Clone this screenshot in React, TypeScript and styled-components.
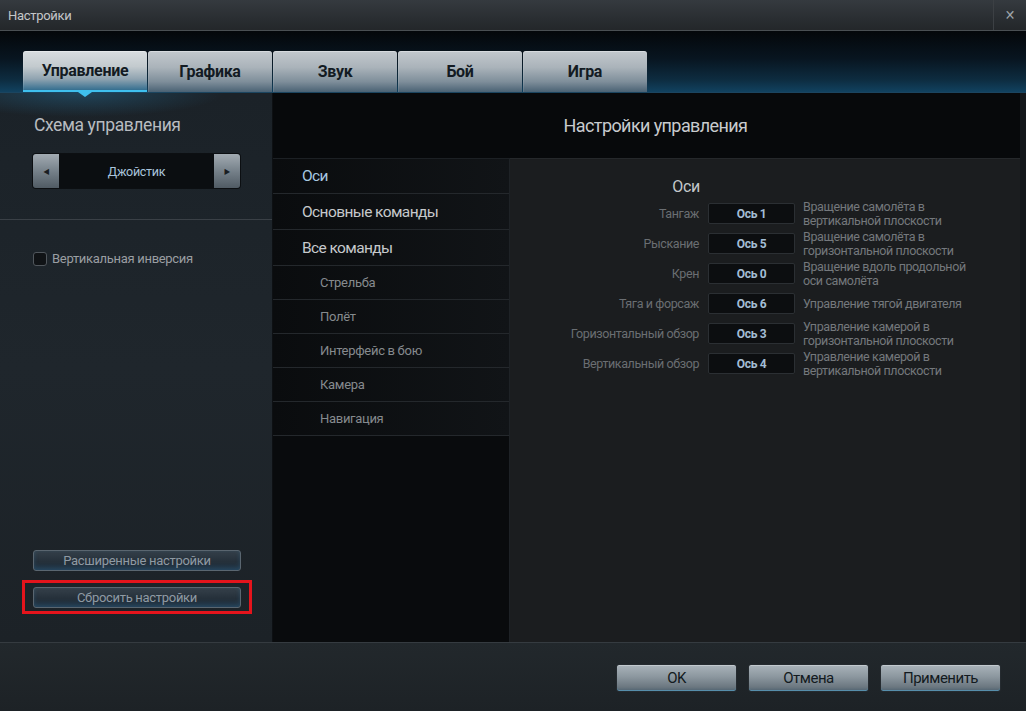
import React from "react";
import styled, { createGlobalStyle, css } from "styled-components";

const FONT = `"Roboto", "DejaVu Sans Condensed", sans-serif`;

const Global = createGlobalStyle`
  html, body { margin: 0; padding: 0; background: #15191c; }
  body { font-family: ${FONT}; letter-spacing: -0.3px; }
  * { box-sizing: border-box; }
`;

const Window = styled.div`
  width: 1026px;
  height: 711px;
  display: flex;
  flex-direction: column;
  background: #1d2226;
  overflow: hidden;
`;

const TitleBar = styled.div`
  height: 31px;
  display: flex;
  align-items: center;
  background: linear-gradient(180deg, #353a3f 0%, #2a2e32 60%, #24272a 100%);
  border-bottom: 1px solid #4a4f53;
  color: #c4c6c8;
  font-size: 13px;
  padding-left: 8px;
`;

const Title = styled.div`
  flex: 1;
`;

const CloseBox = styled.div`
  width: 33px;
  height: 30px;
  border-left: 1px solid #3c4044;
  display: flex;
  align-items: center;
  justify-content: center;
  color: #9ea4a9;
  font-size: 14px;
  font-weight: bold;
`;

const TabStrip = styled.div`
  height: 62px;
  display: flex;
  align-items: flex-end;
  padding-left: 23px;
  gap: 1px;
  background: linear-gradient(180deg, #04070a 0%, #081520 45%, #0d2c40 80%, #114260 100%);
  border-bottom: 1px solid #1b4560;
`;

const Tab = styled.div<{ $active?: boolean }>`
  position: relative;
  width: 124px;
  height: 41px;
  display: flex;
  align-items: center;
  justify-content: center;
  border-radius: 3px 3px 0 0;
  font-weight: bold;
  font-size: 16px;
  color: #131b23;
  background: linear-gradient(180deg, #c2c8cd 0%, #aab3ba 40%, #7e8e9a 75%, #4a6274 100%);
  box-shadow: inset 0 1px 0 rgba(255, 255, 255, 0.35), inset 1px 0 0 rgba(255, 255, 255, 0.1);
  ${(p) =>
    p.$active &&
    css`
      background: linear-gradient(180deg, #d8dde0 0%, #c3cace 40%, #8fa3b0 72%, #356f90 100%);
      border-bottom: 2px solid #3fc0ee;
      &::after {
        content: "";
        position: absolute;
        left: 55px;
        bottom: -7px;
        border-left: 7px solid transparent;
        border-right: 7px solid transparent;
        border-top: 5px solid #3fc0ee;
      }
    `}
`;

const Body = styled.div`
  height: 549px;
  display: flex;
`;

const LeftPanel = styled.div`
  width: 273px;
  display: flex;
  flex-direction: column;
  background:
    radial-gradient(ellipse 180px 30px at 80px 0px, rgba(40, 130, 180, 0.35), transparent 80%),
    linear-gradient(180deg, #1b2228 0%, #1f262c 50%, #1c2227 100%);
  border-right: 1px solid #0d1013;
`;

const SchemeHead = styled.div`
  padding: 22px 0 0 34px;
  color: #b8bcc0;
  font-size: 17.5px;
  letter-spacing: -0.4px;
  height: 61px;
`;

const Selector = styled.div`
  margin-left: 33px;
  width: 207px;
  height: 34px;
  display: flex;
  border-radius: 3px;
  overflow: hidden;
  box-shadow: 0 0 0 1px #0c0f12;
`;

const ArrowBtn = styled.div`
  width: 26px;
  display: flex;
  align-items: center;
  justify-content: center;
  background: linear-gradient(180deg, #a2abb2 0%, #76818a 50%, #505b64 100%);
  color: #1a1e22;
  font-size: 8px;
`;

const SelValue = styled.div`
  flex: 1;
  display: flex;
  align-items: center;
  justify-content: center;
  background: #0b0e11;
  color: #a9c4dc;
  font-size: 12.5px;
`;

const Divider = styled.div`
  margin-top: 31px;
  height: 1px;
  background: #3a4046;
`;

const CheckRow = styled.label`
  margin: 31px 0 0 33px;
  display: flex;
  align-items: center;
  gap: 5px;
  color: #9a9ea2;
  font-size: 13px;
`;

const CheckBox = styled.span`
  width: 14px;
  height: 14px;
  border: 1px solid #50565c;
  border-radius: 3px;
  background: #101316;
`;

const LeftButtons = styled.div`
  margin-top: auto;
  margin-bottom: 28px;
  display: flex;
  flex-direction: column;
  gap: 16px;
  padding-left: 33px;
`;

const Highlight = styled.div`
  margin-left: -11px;
  width: 230px;
  height: 34px;
  border: 3px solid #e5141c;
  margin-top: -7px;
  padding: 4px 8px;
`;

const SmallBtn = styled.div`
  width: 208px;
  height: 21px;
  display: flex;
  align-items: center;
  justify-content: center;
  border: 1px solid #5a6670;
  border-radius: 3px;
  background: linear-gradient(180deg, #35404a 0%, #25303a 55%, #1f3242 100%);
  box-shadow: inset 0 -2px 4px rgba(60, 140, 190, 0.25);
  color: #8f9aa4;
  font-size: 13px;
`;

const RightPanel = styled.div`
  flex: 1;
  display: flex;
  flex-direction: column;
  border-right: 6px solid #14171a;
`;

const RightHeader = styled.div`
  height: 65px;
  display: flex;
  align-items: center;
  justify-content: center;
  background: #07090b;
  color: #c8cbce;
  font-size: 18px;
  letter-spacing: -0.6px;
  padding-left: 18px;
`;

const RightBody = styled.div`
  flex: 1;
  display: flex;
`;

const NavList = styled.div`
  width: 237px;
  background: #090b0d;
  border-right: 1px solid #1e2226;
  border-top: 1px solid #1c2024;
`;

const NavItem = styled.div<{ $sub?: boolean; $active?: boolean }>`
  height: ${(p) => (p.$sub ? 34 : 36)}px;
  display: flex;
  align-items: center;
  padding-left: ${(p) => (p.$sub ? 47 : 29)}px;
  font-size: ${(p) => (p.$sub ? 13 : 15.5)}px;
  letter-spacing: ${(p) => (p.$sub ? -0.3 : -0.6)}px;
  color: ${(p) => (p.$active ? "#a8c8e2" : p.$sub ? "#868a8e" : "#c6c9cc")};
  background: linear-gradient(90deg, #0a0c0e 0%, #111417 100%);
  border-bottom: 1px solid #24282c;
  &:first-child {
    height: 35px;
  }
`;

const Content = styled.div`
  flex: 1;
  background: #1b1d1f;
  border-top: 1px solid #25282b;
  padding: 14px 0 0 10px;
`;

const AxisGrid = styled.div`
  display: grid;
  grid-template-columns: 180px 87px auto;
  grid-auto-rows: 21px;
  column-gap: 8px;
  row-gap: 9px;
  align-items: center;
`;

const AxisHead = styled.div`
  grid-column: 1;
  text-align: right;
  color: #c5c8cb;
  font-size: 16px;
  padding-right: 0px;
  margin-top: 5px;
`;

const AxisLabel = styled.div`
  text-align: right;
  color: #6a6e72;
  font-size: 12.5px;
  letter-spacing: -0.4px;
  padding-right: 1px;
`;

const AxisBox = styled.div`
  height: 21px;
  display: flex;
  align-items: center;
  justify-content: center;
  border: 1px solid #2b2f33;
  border-radius: 2px;
  background: #0c0e10;
  color: #a3bdd4;
  font-weight: bold;
  font-size: 12px;
`;

const AxisDesc = styled.div`
  color: #74787c;
  font-size: 12.5px;
  letter-spacing: -0.4px;
  line-height: 14px;
`;

const Footer = styled.div`
  flex: 1;
  display: flex;
  justify-content: flex-end;
  align-items: flex-start;
  padding: 21px 25px 0 0;
  gap: 11px;
  background: linear-gradient(180deg, #22282c 0%, #1d2226 100%);
  border-top: 1px solid #353b40;
`;

const BigBtn = styled.div`
  width: 121px;
  height: 28px;
  display: flex;
  align-items: center;
  justify-content: center;
  border-radius: 3px;
  border: 1px solid #252b30;
  background: linear-gradient(180deg, #a9b3ba 0%, #8c979f 45%, #6b7780 85%, #4f6270 100%);
  box-shadow: inset 0 1px 0 rgba(255, 255, 255, 0.3), inset 0 -1px 0 rgba(90, 170, 210, 0.6);
  color: #131a20;
  font-size: 15px;
  letter-spacing: -0.5px;
`;

const tabs = ["Управление", "Графика", "Звук", "Бой", "Игра"];

const navMain = ["Оси", "Основные команды", "Все команды"];
const navSub = ["Стрельба", "Полёт", "Интерфейс в бою", "Камера", "Навигация"];

const axes = [
  { label: "Тангаж", axis: "Ось 1", desc: ["Вращение самолёта в", "вертикальной плоскости"] },
  { label: "Рыскание", axis: "Ось 5", desc: ["Вращение самолёта в", "горизонтальной плоскости"] },
  { label: "Крен", axis: "Ось 0", desc: ["Вращение вдоль продольной", "оси самолёта"] },
  { label: "Тяга и форсаж", axis: "Ось 6", desc: ["Управление тягой двигателя"] },
  { label: "Горизонтальный обзор", axis: "Ось 3", desc: ["Управление камерой в", "горизонтальной плоскости"] },
  { label: "Вертикальный обзор", axis: "Ось 4", desc: ["Управление камерой в", "вертикальной плоскости"] },
];

export default function App() {
  return (
    <>
      <Global />
      <Window>
        <TitleBar>
          <Title>Настройки</Title>
          <CloseBox>✕</CloseBox>
        </TitleBar>
        <TabStrip>
          {tabs.map((t, i) => (
            <Tab key={t} $active={i === 0}>
              {t}
            </Tab>
          ))}
        </TabStrip>
        <Body>
          <LeftPanel>
            <SchemeHead>Схема управления</SchemeHead>
            <Selector>
              <ArrowBtn>◀</ArrowBtn>
              <SelValue>Джойстик</SelValue>
              <ArrowBtn>▶</ArrowBtn>
            </Selector>
            <Divider />
            <CheckRow>
              <CheckBox />
              Вертикальная инверсия
            </CheckRow>
            <LeftButtons>
              <SmallBtn>Расширенные настройки</SmallBtn>
              <Highlight>
                <SmallBtn>Сбросить настройки</SmallBtn>
              </Highlight>
            </LeftButtons>
          </LeftPanel>
          <RightPanel>
            <RightHeader>Настройки управления</RightHeader>
            <RightBody>
              <NavList>
                {navMain.map((n, i) => (
                  <NavItem key={n} $active={i === 0}>
                    {n}
                  </NavItem>
                ))}
                {navSub.map((n) => (
                  <NavItem key={n} $sub>
                    {n}
                  </NavItem>
                ))}
              </NavList>
              <Content>
                <AxisGrid>
                  <AxisHead>Оси</AxisHead>
                  <div />
                  <div />
                  {axes.map((a) => (
                    <React.Fragment key={a.label}>
                      <AxisLabel>{a.label}</AxisLabel>
                      <AxisBox>{a.axis}</AxisBox>
                      <AxisDesc>
                        {a.desc.map((d) => (
                          <div key={d}>{d}</div>
                        ))}
                      </AxisDesc>
                    </React.Fragment>
                  ))}
                </AxisGrid>
              </Content>
            </RightBody>
          </RightPanel>
        </Body>
        <Footer>
          <BigBtn>OK</BigBtn>
          <BigBtn>Отмена</BigBtn>
          <BigBtn>Применить</BigBtn>
        </Footer>
      </Window>
    </>
  );
}
